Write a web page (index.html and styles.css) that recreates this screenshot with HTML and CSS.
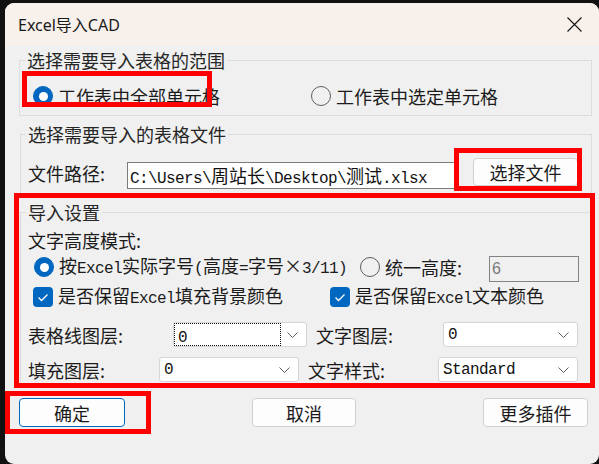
FILE: index.html
```html
<!DOCTYPE html>
<html lang="zh-CN">
<head>
<meta charset="utf-8">
<title>Excel导入CAD</title>
<link rel="stylesheet" href="styles.css">
</head>
<body>
<div class="window">
  <div class="titlebar">
    <span class="title">Excel导入CAD</span>
    <svg class="close" viewBox="0 0 15 15" width="15" height="15"><path d="M0.5 0.5 L14.5 14.5 M14.5 0.5 L0.5 14.5" stroke="#1a1a1a" stroke-width="1.2" fill="none"/></svg>
  </div>
  <div class="content">
    <fieldset class="group g1">
      <legend>选择需要导入表格的范围</legend>
      <div class="gbody">
        <div class="row r-range">
          <label class="opt o-all"><span class="radio on"></span><span class="txt">工作表中全部单元格</span></label>
          <label class="opt"><span class="radio"></span><span class="txt">工作表中选定单元格</span></label>
        </div>
      </div>
    </fieldset>

    <fieldset class="group g2">
      <legend>选择需要导入的表格文件</legend>
      <div class="gbody">
        <div class="frow">
          <span class="flabel">文件路径:</span>
          <div class="path"><span class="m">C:\Users\</span>周站长<span class="m">\Desktop\</span>测试<span class="m">.xlsx</span></div>
          <button class="btn btn-file">选择文件</button>
        </div>
      </div>
    </fieldset>

    <fieldset class="group g3">
      <legend>导入设置</legend>
      <div class="gbody">
        <div class="lbl-row">文字高度模式:</div>
        <div class="mode-row">
          <label class="opt o-real"><span class="radio on"></span><span class="txt">按<span class="m">Excel</span>实际字号<span class="m">(</span>高度<span class="m">=</span>字号×<span class="m">3/11)</span></span></label>
          <label class="opt o-same"><span class="radio"></span><span class="txt">统一高度:</span></label>
          <div class="num">6</div>
        </div>
        <div class="chk-row">
          <label class="opt o-fill"><span class="check"><svg viewBox="0 0 20 20" width="20" height="20"><polyline points="5.5,10.5 8.5,13.5 14.5,7.5" fill="none" stroke="#fff" stroke-width="1.3"/></svg></span><span class="txt">是否保留<span class="m">Excel</span>填充背景颜色</span></label>
          <label class="opt"><span class="check"><svg viewBox="0 0 20 20" width="20" height="20"><polyline points="5.5,10.5 8.5,13.5 14.5,7.5" fill="none" stroke="#fff" stroke-width="1.3"/></svg></span><span class="txt">是否保留<span class="m">Excel</span>文本颜色</span></label>
        </div>
        <div class="combo-row c-row1">
          <span class="clabel cl1">表格线图层:</span>
          <div class="combo cb1"><span class="focus"><span class="m">0</span></span><svg class="chev" viewBox="0 0 11 6" width="11" height="6"><polyline points="0.5,0.5 5.5,5.5 10.5,0.5" fill="none" stroke="#5c5c5c" stroke-width="1"/></svg></div>
          <span class="clabel cl2">文字图层:</span>
          <div class="combo cb2"><span class="m">0</span><svg class="chev" viewBox="0 0 11 6" width="11" height="6"><polyline points="0.5,0.5 5.5,5.5 10.5,0.5" fill="none" stroke="#5c5c5c" stroke-width="1"/></svg></div>
        </div>
        <div class="combo-row c-row2">
          <span class="clabel cl3">填充图层:</span>
          <div class="combo cb3"><span class="m">0</span><svg class="chev" viewBox="0 0 11 6" width="11" height="6"><polyline points="0.5,0.5 5.5,5.5 10.5,0.5" fill="none" stroke="#5c5c5c" stroke-width="1"/></svg></div>
          <span class="clabel cl4">文字样式:</span>
          <div class="combo cb4"><span class="m">Standard</span><svg class="chev" viewBox="0 0 11 6" width="11" height="6"><polyline points="0.5,0.5 5.5,5.5 10.5,0.5" fill="none" stroke="#5c5c5c" stroke-width="1"/></svg></div>
        </div>
      </div>
    </fieldset>

    <div class="buttons">
      <button class="btn btn-ok">确定</button>
      <button class="btn btn-cancel">取消</button>
      <button class="btn btn-more">更多插件</button>
    </div>
  </div>
</div>

<div class="mark mk1"></div>
<div class="mark mk2"></div>
<div class="mark mk3"></div>
<div class="mark mk4"></div>
</body>
</html>
```

FILE: styles.css
```css
* { box-sizing: border-box; }
html, body { margin: 0; padding: 0; }
body {
  background: #111;
  width: 599px;
  height: 464px;
  overflow: hidden;
  position: relative;
  font-family: "Noto Sans CJK SC", "Noto Sans", sans-serif;
  font-size: 18px;
  line-height: 24px;
  color: #1b1b1b;
}
.window {
  margin: 3px 0 0 5px;
  width: 594px;
  height: 461px;
  background: #f0f0f0;
  border-radius: 9px;
  overflow: hidden;
}
.titlebar {
  height: 43px;
  background: #f7f0eb;
  display: flex;
  align-items: center;
  padding: 0 17px 0 13px;
}
.title {
  flex: 1;
  font-family: "Noto Sans", "Noto Sans CJK SC", sans-serif;
  font-size: 16px;
  line-height: 20px;
  color: #1a1a1a;
}
.close { display: block; }
.content { padding: 4px 0 0 14px; }

.group {
  margin: 0;
  padding: 0;
  width: 573px;
  min-width: 0;
  border: 1px solid #dcdcdc;
}
.group legend {
  margin-left: 5px;
  padding: 0 2px;
  font-size: 18px;
  line-height: 20px;
  color: #262626;
}
.g2 { margin: 8px 0 0 1px; width: 572px; }
.g3 { margin: 5px 0 0 1px; width: 572px; }
.g1 .gbody { padding: 14px 0 7px 7px; }
.g2 .gbody { padding: 14px 0 7px 7px; }
.g3 .gbody { padding: 6px 0 3px 7px; }

.m { font-family: "Liberation Mono", monospace; font-size: 16px; letter-spacing: -0.6px; }

.row { display: flex; align-items: center; height: 24px; }
.opt { display: flex; align-items: center; gap: 5px; white-space: nowrap; }
.txt { white-space: nowrap; line-height: 22px; }
.o-all { margin-left: 6px; width: 278px; }

.radio {
  width: 20px; height: 20px; flex: none;
  border-radius: 50%;
  border: 1px solid #5f5f5f;
  display: flex; align-items: center; justify-content: center;
}
.radio.on { background: #0067c0; border-color: #0067c0; }
.radio.on::after {
  content: "";
  width: 9px; height: 9px;
  border-radius: 50%;
  background: #fff;
}
.check {
  width: 20px; height: 20px; flex: none;
  border-radius: 4px;
  background: #0067c0;
  display: block;
}
.check svg { display: block; }

.frow { display: flex; align-items: flex-start; height: 31px; }
.flabel { width: 99px; margin-top: 5px; line-height: 20px; }
.path {
  width: 328px; height: 27px; margin-top: 4px;
  border: 1px solid #7a7a7a;
  background: #fff;
  padding-left: 2px;
  line-height: 25px;
  white-space: nowrap;
  overflow: hidden;
  color: #111;
}
.btn {
  background: #fdfdfd;
  border: 1px solid #d0d0d0;
  border-radius: 4px;
  font-family: "Noto Sans CJK SC", sans-serif;
  font-size: 18px;
  line-height: 26px;
  color: #1b1b1b;
  padding: 0;
  text-align: center;
}
.btn-file { margin-left: 18px; width: 105px; height: 28px; }

.lbl-row { height: 24px; line-height: 24px; }
.mode-row { margin-top: 4px; height: 26px; display: flex; align-items: flex-start; }
.mode-row .opt { height: 22px; }
.o-real { margin-left: 6px; width: 326px; }
.o-same { width: 129px; }
.num {
  width: 90px; height: 26px;
  border: 1px solid #838383;
  background: #f0f0f0;
  color: #7a7a7a;
  font-family: "Liberation Sans", sans-serif;
  font-size: 16px;
  line-height: 24px;
  padding-left: 2px;
}
.chk-row { margin-top: 3px; height: 24px; display: flex; align-items: center; }
.o-fill { margin-left: 5px; width: 297px; }

.combo-row { display: flex; align-items: center; height: 25px; }
.c-row1 { margin-top: 13px; }
.c-row2 { margin-top: 10px; }
.clabel { white-space: nowrap; line-height: 24px; }
.cl1 { width: 145px; }
.cl2 { margin-left: 9px; width: 127px; }
.cl3 { width: 131px; }
.cl4 { margin-left: 9px; width: 130px; }
.combo {
  height: 25px;
  background: #fff;
  border: 1px solid #d5d5d5;
  border-radius: 3px;
  display: flex;
  align-items: center;
  padding-left: 4px;
  color: #111;
}
.cb1 { width: 134px; padding-left: 1px; }
.cb2 { width: 135px; }
.cb3 { width: 140px; }
.cb4 { width: 140px; }
.focus {
  width: 105px; height: 21px;
  outline: 1px dotted #111;
  padding-left: 3px;
  line-height: 21px;
}
.chev { margin-left: auto; margin-right: 8px; flex: none; }

.buttons { margin-top: 12px; display: flex; height: 29px; }
.buttons .btn { height: 29px; }
.btn-ok { width: 106px; border-color: #0067c0; }
.btn-cancel { margin-left: 127px; width: 104px; }
.btn-more { margin-left: 127px; width: 105px; }

.mark { position: absolute; border: 5px solid #ff0000; }
.mk1 { left: 22px; top: 71px; width: 190px; height: 36px; }
.mk2 { left: 454px; top: 148px; width: 128px; height: 43px; }
.mk3 { left: 14px; top: 193px; width: 581px; height: 195px; }
.mk4 { left: 5px; top: 391px; width: 146px; height: 43px; }
```
